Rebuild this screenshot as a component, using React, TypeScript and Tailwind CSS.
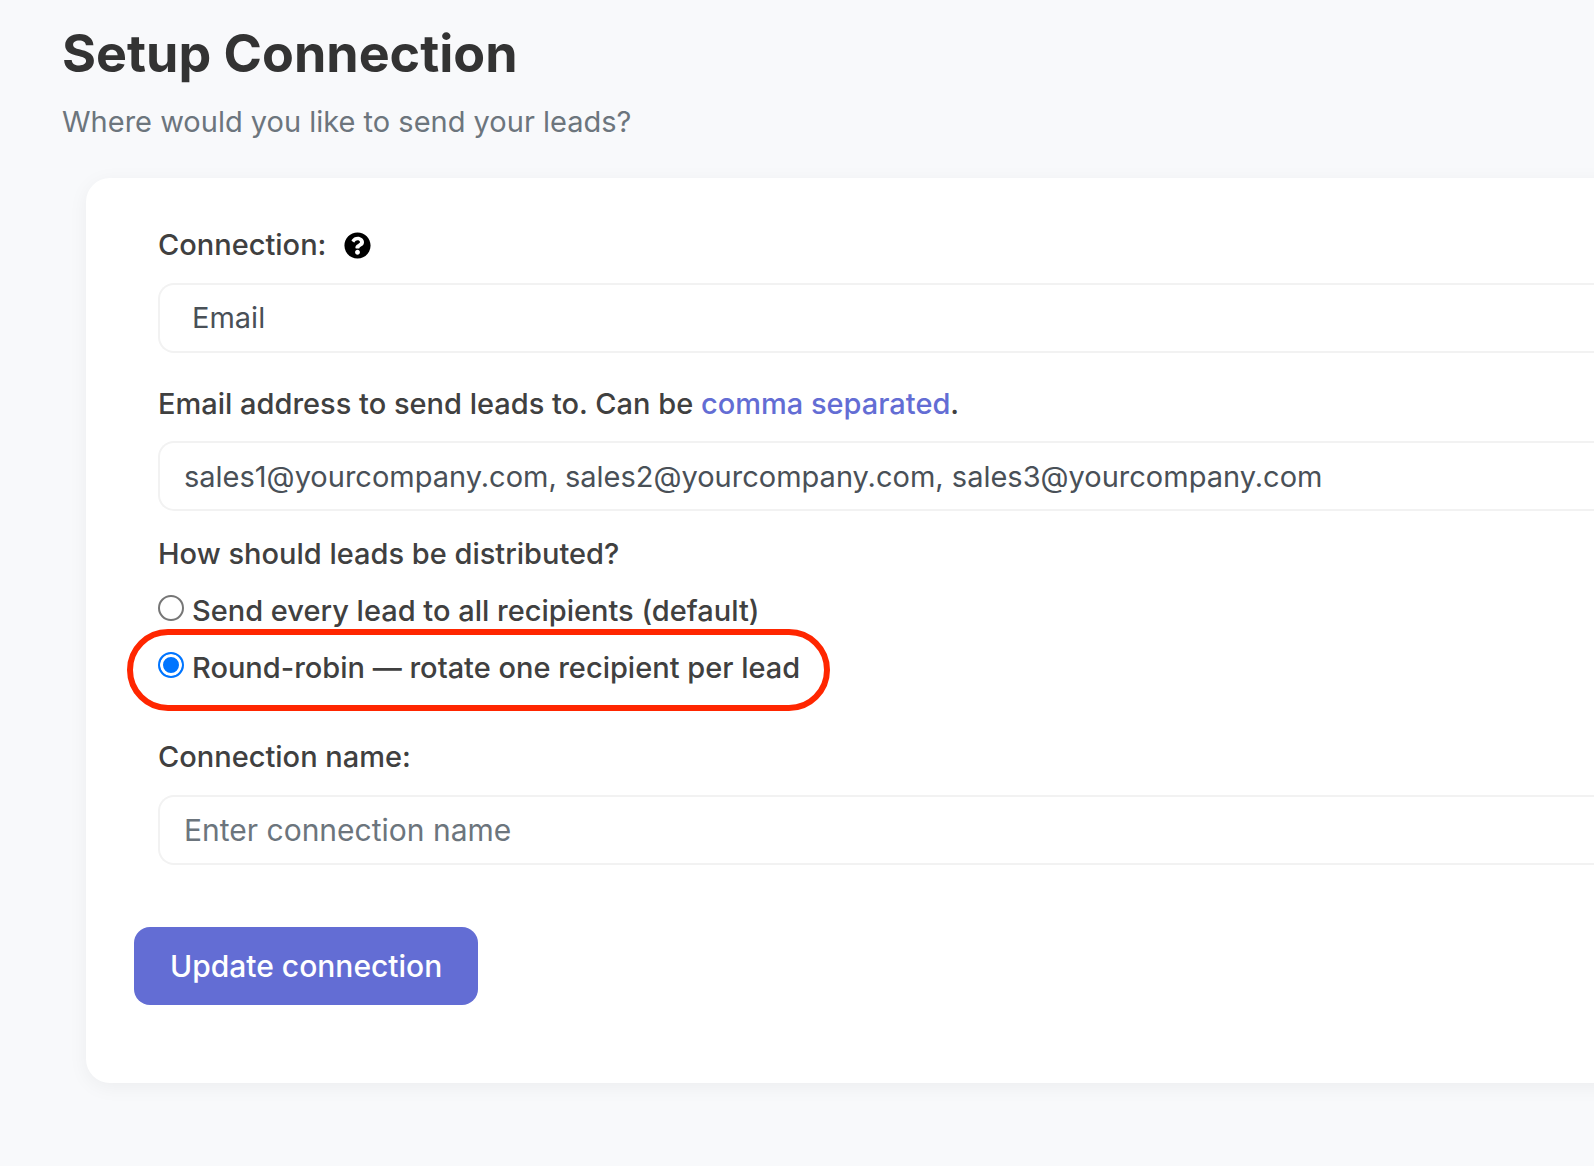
import { useState } from "react";
import { FaQuestionCircle } from "react-icons/fa";

const labelClass = "text-[29px] leading-[42px] font-medium text-[#404040]";
const fieldClass =
  "block h-[70px] w-full rounded-l-2xl border-2 border-r-0 border-[#f2f2f2] bg-white text-[29px] text-[#495057] outline-none placeholder:text-[30px] placeholder:text-[#6c757d] placeholder:opacity-100";
const radioClass =
  "mt-[5px] size-[26px] shrink-0 appearance-none rounded-full border-2 border-[#767676] bg-white checked:border-[#0075ff] checked:bg-[#0075ff] checked:shadow-[inset_0_0_0_3px_#fff]";

export default function App() {
  const [mode, setMode] = useState("round-robin");
  const [emails, setEmails] = useState(
    "sales1@yourcompany.com, sales2@yourcompany.com, sales3@yourcompany.com",
  );

  return (
    <main className="min-h-screen overflow-hidden bg-[#f8f9fb] pt-6 pb-20 font-['Inter',sans-serif]">
      <header className="pl-[62px]">
        <h1 className="text-[52px] leading-[60px] font-bold text-[#333]">Setup Connection</h1>
        <p className="mt-[17px] text-[29px] leading-[42px] text-[#6c757d]">
          Where would you like to send your leads?
        </p>
      </header>

      <form
        className="mt-[35px] -mr-8 ml-[86px] rounded-l-3xl bg-white pt-[46px] pb-[78px] pl-12 shadow-[0_4px_20px_rgba(0,0,0,0.05)]"
        onSubmit={(event) => event.preventDefault()}
      >
        <div className="pl-6">
          <div className="flex items-center gap-[18px]">
            <label htmlFor="connection" className={labelClass}>
              Connection:
            </label>
            <button type="button" aria-label="About connections" className="text-black">
              <FaQuestionCircle className="size-[27px]" />
            </button>
          </div>
          <select id="connection" className={`${fieldClass} mt-[17px] appearance-none pl-8`}>
            <option>Email</option>
          </select>

          <div className="mt-[30px]">
            <label htmlFor="emails" className={labelClass}>
              Email address to send leads to. Can be{" "}
              <a href="#comma-separated" className="text-[#636dd4]">
                comma separated
              </a>
              .
            </label>
          </div>
          <input
            id="emails"
            type="text"
            value={emails}
            onChange={(event) => setEmails(event.target.value)}
            className={`${fieldClass} mt-4 pl-6`}
          />

          <fieldset className="mt-[22px]">
            <legend className={labelClass}>How should leads be distributed?</legend>
            <div className="mt-[15px] flex gap-2">
              <input
                id="mode-all"
                type="radio"
                name="mode"
                checked={mode === "all"}
                onChange={() => setMode("all")}
                className={radioClass}
              />
              <label htmlFor="mode-all" className={labelClass}>
                Send every lead to all recipients (default)
              </label>
            </div>
            <div className="relative mt-[15px] flex w-fit gap-2">
              <input
                id="mode-round-robin"
                type="radio"
                name="mode"
                checked={mode === "round-robin"}
                onChange={() => setMode("round-robin")}
                className={radioClass}
              />
              <label htmlFor="mode-round-robin" className={labelClass}>
                Round-robin — rotate one recipient per lead
              </label>
              <div className="pointer-events-none absolute -top-[18px] -right-[30px] -bottom-[22px] -left-[31px] rounded-full border-6 border-[#ff2600]" />
            </div>
          </fieldset>

          <div className="mt-[47px]">
            <label htmlFor="name" className={labelClass}>
              Connection name:
            </label>
          </div>
          <input
            id="name"
            type="text"
            placeholder="Enter connection name"
            className={`${fieldClass} mt-[17px] pl-6`}
          />
        </div>

        <button
          type="submit"
          className="mt-[62px] h-[78px] rounded-2xl bg-[#636dd4] px-9 text-[30px] font-medium text-white"
        >
          Update connection
        </button>
      </form>
    </main>
  );
}
